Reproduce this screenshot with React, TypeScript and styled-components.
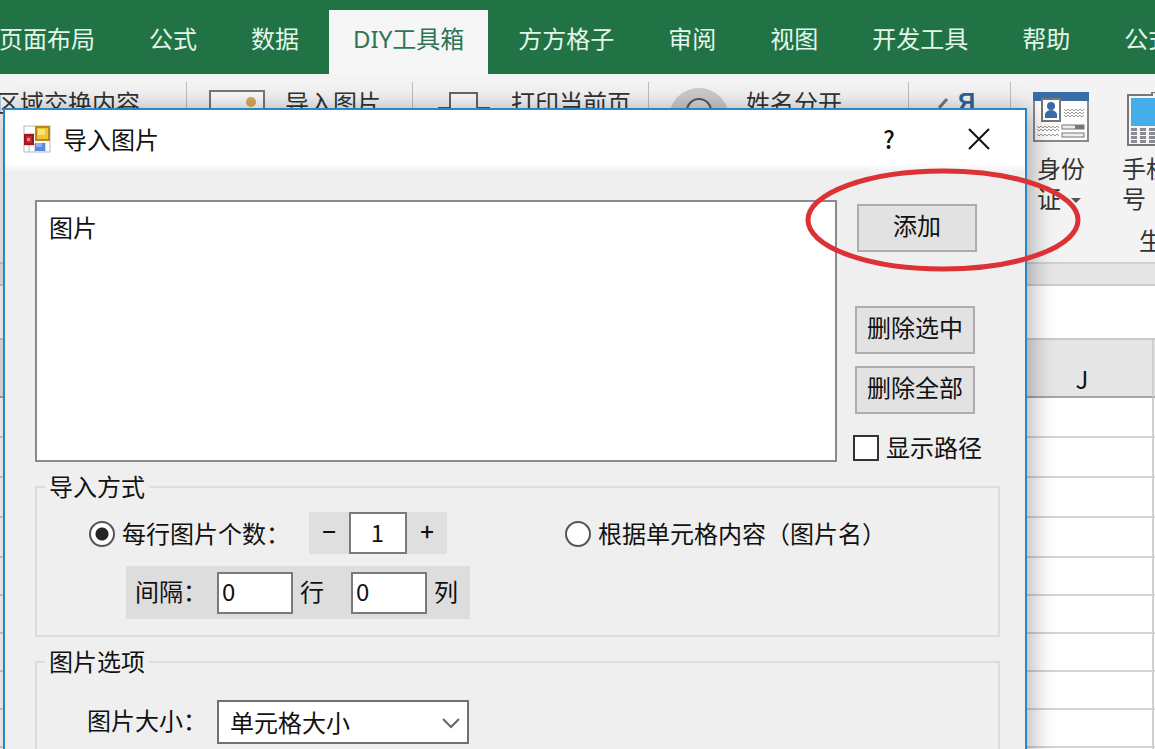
import React, { useState } from "react";
import styled, { createGlobalStyle } from "styled-components";

const GlobalStyle = createGlobalStyle`
  *, *::before, *::after { box-sizing: border-box; }
  body {
    margin: 0;
    font-family: "Noto Sans CJK SC", sans-serif;
    font-size: 24px;
    line-height: 28px;
    color: #111;
  }
  button, input, select { font: inherit; color: inherit; }
`;

const Page = styled.div`
  position: relative;
  display: flex;
  flex-direction: column;
  height: 100vh;
  overflow: hidden;
  background: #fff;
`;

/* ---------- workbook behind the dialog ---------- */

const TabBar = styled.nav`
  display: flex;
  flex: none;
  gap: 6px;
  height: 74px;
  padding-top: 10px;
  overflow: hidden;
  background: #217346;
`;

const Tab = styled.button<{ $active?: boolean }>`
  flex: none;
  padding: 0 24px 6px;
  border: 0;
  white-space: nowrap;
  font-family: "Noto Sans", "Noto Sans CJK SC", sans-serif;
  background: ${(p) => (p.$active ? "#f5f6f5" : "transparent")};
  color: ${(p) => (p.$active ? "#2f7355" : "#e4f6e9")};
  &:first-child { margin-left: -25px; }
`;

const Ribbon = styled.div`
  display: flex;
  flex: none;
  height: 190px;
  padding-top: 8px;
  overflow: hidden;
  background: #f3f3f4;
  border-bottom: 2px solid #cfcfcf;
`;

const Group = styled.div<{ $width: number; $pad: number; $gap: number }>`
  display: flex;
  flex: none;
  align-items: flex-start;
  width: ${(p) => p.$width}px;
  padding: 6px 0 0 ${(p) => p.$pad}px;
  gap: ${(p) => p.$gap}px;
  white-space: nowrap;
  color: #333;
  border-right: 1px solid #bdbdbf;
  svg { display: block; flex: none; }
`;

const FirstCommand = styled.span`
  margin-left: -4px;
`;

const BlueLetter = styled.span`
  font-family: "Liberation Sans", sans-serif;
  font-weight: 700;
  color: #2f6298;
`;

const LargeGroup = styled.div`
  display: flex;
  flex: none;
  flex-direction: column;
  padding: 10px 0 0 22px;
`;

const LargeRow = styled.div`
  display: flex;
  gap: 33px;
`;

const LargeButton = styled.button`
  display: flex;
  flex-direction: column;
  align-items: center;
  padding: 0;
  border: 0;
  background: none;
  color: #333;
  line-height: 30px;
  text-align: left;
`;

const LargeIcon = styled.span`
  display: block;
  height: 61px;
  svg { display: block; }
`;

const LargeLabel = styled.span`
  display: block;
  width: 48px;
  white-space: nowrap;
  svg { margin: 0 0 4px 9px; }
`;

const GroupName = styled.div`
  padding: 13px 0 0 106px;
  color: #333;
`;

const Strip = styled.div`
  flex: none;
  height: 22px;
  background: #e6e6e6;
  border-bottom: 2px solid #cdcdcd;
`;

const FormulaBar = styled.div`
  flex: none;
  height: 54px;
  background: #fff;
  border-bottom: 2px solid #cacaca;
`;

const Sheet = styled.table`
  width: 100%;
  table-layout: fixed;
  border-collapse: separate;
  border-spacing: 0;
  th {
    height: 58px;
    padding: 0 0 3px 2px;
    vertical-align: bottom;
    font-weight: 400;
    background: #e6e6e6;
    border-bottom: 2px solid #a6a6a6;
  }
  td {
    height: 38px;
    padding: 0;
    border-bottom: 2px solid #d4d4d4;
  }
  tr:nth-child(-n + 4) td { height: 40px; }
  td:nth-child(2), th:nth-child(2) { border-right: 2px solid #cfcfcf; }
`;

/* ---------- dialog ---------- */

const Dialog = styled.section`
  position: absolute;
  top: 108px;
  left: 3px;
  right: 128px;
  border: 2px solid #2a86c4;
  background: #efefef;
  box-shadow: 4px 2px 24px rgba(0, 0, 0, 0.32);
`;

const TitleBar = styled.header`
  display: flex;
  align-items: center;
  height: 62px;
  padding: 0 31px 5px 18px;
  background: linear-gradient(#fff 54px, #efefef);
  svg { display: block; }
`;

const Title = styled.h1`
  flex: 1;
  margin: 0 0 0 12px;
  font-size: 24px;
  font-weight: 400;
`;

const CaptionButton = styled.button`
  display: flex;
  justify-content: center;
  align-items: center;
  width: 30px;
  height: 30px;
  margin-left: 60px;
  padding: 0;
  border: 0;
  background: none;
  font-weight: 500;
`;

const Body = styled.div`
  padding: 28px 25px 0 30px;
`;

const TopArea = styled.div`
  display: flex;
  align-items: flex-start;
  gap: 18px;
`;

const ListBox = styled.div`
  flex: 1;
  height: 262px;
  padding: 11px 12px;
  background: #fff;
  border: 2px solid #8a8a8a;
`;

const Side = styled.div`
  display: flex;
  flex-direction: column;
  width: 145px;
  padding-top: 4px;
`;

const PushButton = styled.button<{ $gap: number; $indent?: number }>`
  width: 120px;
  height: 48px;
  margin: 0 0 ${(p) => p.$gap}px ${(p) => p.$indent || 0}px;
  padding: 0 0 6px;
  border: 2px solid #adadad;
  background: #e2e2e2;
  white-space: nowrap;
`;

const CheckLabel = styled.label`
  display: flex;
  align-items: center;
  gap: 7px;
  margin-left: -2px;
  height: 28px;
  white-space: nowrap;
`;

const CheckBox = styled.input`
  appearance: none;
  width: 26px;
  height: 26px;
  margin: 2px 0 0;
  border: 2px solid #333;
  background: #fff;
  &:checked { background: #333; box-shadow: inset 0 0 0 4px #fff; }
`;

const FieldGroup = styled.fieldset<{ $top: number }>`
  margin: 11px 0 0;
  padding: ${(p) => p.$top}px 0 16px;
  border: 2px solid #dcdcdc;
`;

const Legend = styled.legend`
  margin-left: 8px;
  padding: 0 4px 2px;
  line-height: 26px;
`;

const Row = styled.div`
  display: flex;
  align-items: center;
`;

const ModeRow = styled(Row)`
  height: 42px;
  padding-left: 52px;
`;

const RadioLabel = styled.label`
  display: flex;
  align-items: center;
  gap: 7px;
  white-space: nowrap;
`;

const Radio = styled.input`
  appearance: none;
  width: 26px;
  height: 26px;
  margin: 2px 0 0;
  border: 2px solid #555;
  border-radius: 50%;
  background: #fff;
  &:checked { background: radial-gradient(circle, #262626 0 6px, #fff 7px); }
`;

const Stepper = styled.div`
  display: flex;
  margin: 0 118px 0 19px;
  background: #dfdfdf;
`;

const StepButton = styled.button`
  width: 40px;
  height: 42px;
  padding: 0 0 4px;
  border: 0;
  background: none;
  font-weight: 500;
`;

const TextBox = styled.input<{ $width: number; $center?: boolean }>`
  width: ${(p) => p.$width}px;
  height: 42px;
  padding: 0 4px 4px 3px;
  border: 2px solid #7a7a7a;
  border-radius: 0;
  background: #fff;
  text-align: ${(p) => (p.$center ? "center" : "left")};
`;

const SpacingRow = styled(Row)`
  width: 344px;
  height: 53px;
  margin: 12px 0 0 89px;
  padding-left: 9px;
  gap: 7px;
  background: #dddddd;
`;

const SpacingLabel = styled.label`
  flex: none;
  width: 75px;
  padding-bottom: 4px;
  white-space: nowrap;
`;

const Unit = styled.span`
  flex: none;
  width: 44px;
  padding-bottom: 4px;
  &:last-child { width: 24px; }
`;

const SizeRow = styled(Row)`
  height: 44px;
  padding-left: 50px;
`;

const SizeLabel = styled.label`
  width: 130px;
  padding-bottom: 4px;
  white-space: nowrap;
`;

const SelectWrap = styled.div`
  position: relative;
  width: 252px;
  svg {
    position: absolute;
    right: 8px;
    top: 17px;
    pointer-events: none;
  }
`;

const Select = styled.select`
  appearance: none;
  display: block;
  width: 100%;
  height: 44px;
  padding: 0 36px 0 11px;
  border: 2px solid #707070;
  border-radius: 0;
  background: #fff;
`;

const Highlight = styled.svg`
  position: absolute;
  top: 167px;
  right: 74px;
  pointer-events: none;
`;

/* ---------- drawings ---------- */

const PictureIcon = () => (
  <svg width="56" height="40" viewBox="0 0 56 40">
    <rect x="1" y="3" width="54" height="36" fill="#fafafa" stroke="#777" strokeWidth="2" />
    <circle cx="42" cy="14" r="5" fill="#dda95c" />
    <path d="M2 38 18 24 32 38" fill="none" stroke="#5b8f6b" strokeWidth="2" />
  </svg>
);

const PrinterIcon = () => (
  <svg width="54" height="40" viewBox="0 0 54 40">
    <path d="M13 21V5h27v16" fill="#fafafa" stroke="#666" strokeWidth="2" />
    <path d="M2 38V20h11M40 20h12v18" fill="none" stroke="#555" strokeWidth="2" />
  </svg>
);

const PersonIcon = () => (
  <svg width="60" height="60" viewBox="0 0 60 60">
    <circle cx="30" cy="30" r="30" fill="#cbcbcb" />
    <circle cx="30" cy="23" r="12" fill="#d6d6d6" stroke="#555" strokeWidth="2" />
  </svg>
);

const SlashIcon = () => (
  <svg width="12" height="28" viewBox="0 0 12 28">
    <path d="M1 20 9 11" stroke="#777" strokeWidth="3" />
  </svg>
);

const zigzag = (x: number, y: number, n: number) =>
  `M${x} ${y}` + Array.from({ length: n }, (_, i) => `l2 ${i % 2 ? -2 : 2}`).join("");

const IdCardIcon = () => (
  <svg width="56" height="50" viewBox="0 0 56 50">
    <rect x="1" y="1" width="54" height="48" fill="#fdfdfd" stroke="#8a8a8a" strokeWidth="2" />
    <rect width="56" height="9" fill="#3a6ca8" />
    <rect x="9" y="7" width="18" height="22" fill="#fff" stroke="#777" strokeWidth="2" />
    <circle cx="18" cy="14" r="4" fill="#3a6ca8" />
    <path d="M12 26v-4q2-4 6-4t6 4v4z" fill="#3a6ca8" />
    <path
      d={[
        zigzag(31, 17, 10),
        zigzag(31, 20, 10),
        zigzag(31, 23, 10),
        zigzag(4, 34, 11),
        zigzag(4, 37, 11),
        zigzag(4, 42, 11),
      ].join("")}
      fill="none"
      stroke="#999"
      strokeWidth="1"
    />
    <rect x="29" y="33" width="22" height="4" fill="#eee" stroke="#777" />
    <rect x="42" y="33" width="9" height="4" fill="#777" />
    <rect x="29" y="41" width="22" height="4" fill="#eee" stroke="#777" />
  </svg>
);

const PhoneIcon = () => (
  <svg width="38" height="54" viewBox="0 0 38 54">
    <path d="M1 3h24V0h9v3h3v50H1z" fill="#f4f4f4" stroke="#777" strokeWidth="2" />
    <rect x="4" y="6" width="31" height="28" fill="#45aeea" />
    {[4, 13, 22, 31].map((x) =>
      [36, 40, 44, 48].map((y) => <rect key={`${x}-${y}`} x={x} y={y} width="6" height="3" fill="#8b8b93" />)
    )}
  </svg>
);

const DropArrow = () => (
  <svg width="12" height="6" viewBox="0 0 12 6">
    <path d="M1 0h10L6 5z" fill="#555" />
  </svg>
);

const FormIcon = () => (
  <svg width="28" height="28" viewBox="0 0 28 28">
    <rect x="1" y="1" width="26" height="26" fill="#fff" stroke="#b9b9b9" />
    <path d="M1 9h11M6 19v8M12 19v8M1 20h12M22 17v10" stroke="#b9b9b9" />
    <rect x="13" y="2" width="13" height="13" fill="#f3c62b" stroke="#b8881a" strokeWidth="2" />
    <rect x="15" y="4" width="7" height="6" fill="#fbe27a" />
    <rect x="2" y="10" width="8" height="9" fill="#c9252d" stroke="#971a20" strokeWidth="2" />
    <rect x="4" y="13" width="3" height="3" fill="#f08a8a" />
    <rect x="12" y="18" width="10" height="8" fill="#5b86e6" />
    <rect x="13" y="18" width="6" height="4" fill="#8fb0f5" />
  </svg>
);

const tabs = ["页面布局", "公式", "数据", "DIY工具箱", "方方格子", "审阅", "视图", "开发工具", "帮助", "公式"];

export default function App() {
  const [perRow, setPerRow] = useState(1);
  return (
    <>
      <GlobalStyle />
      <Page>
        <TabBar>
          {tabs.map((t, i) => (
            <Tab key={i} $active={i === 3}>{t}</Tab>
          ))}
        </TabBar>
        <Ribbon>
          <Group $width={187} $pad={0} $gap={0}>
            <FirstCommand>区域交换内容</FirstCommand>
          </Group>
          <Group $width={226} $pad={22} $gap={20}>
            <PictureIcon />
            <span>导入图片</span>
          </Group>
          <Group $width={236} $pad={24} $gap={20}>
            <PrinterIcon />
            <span>打印当前页</span>
          </Group>
          <Group $width={260} $pad={20} $gap={17}>
            <PersonIcon />
            <span>姓名分开</span>
          </Group>
          <Group $width={102} $pad={29} $gap={8}>
            <SlashIcon />
            <BlueLetter>Я</BlueLetter>
          </Group>
          <LargeGroup>
            <LargeRow>
              <LargeButton>
                <LargeIcon><IdCardIcon /></LargeIcon>
                <LargeLabel>身份<br />证<DropArrow /></LargeLabel>
              </LargeButton>
              <LargeButton>
                <LargeIcon><PhoneIcon /></LargeIcon>
                <LargeLabel>手机<br />号<DropArrow /></LargeLabel>
              </LargeButton>
            </LargeRow>
            <GroupName>生成</GroupName>
          </LargeGroup>
        </Ribbon>
        <Strip />
        <FormulaBar />
        <Sheet>
          <colgroup>
            <col />
            <col style={{ width: 144 }} />
            <col style={{ width: 1 }} />
          </colgroup>
          <thead>
            <tr><th /><th scope="col">J</th><th /></tr>
          </thead>
          <tbody>
            {Array.from({ length: 10 }, (_, i) => (
              <tr key={i}><td /><td /><td /></tr>
            ))}
          </tbody>
        </Sheet>

        <Dialog role="dialog" aria-labelledby="dialog-title">
          <TitleBar>
            <FormIcon />
            <Title id="dialog-title">导入图片</Title>
            <CaptionButton>?</CaptionButton>
            <CaptionButton aria-label="关闭">
              <svg width="22" height="22" viewBox="0 0 22 22">
                <path d="M1 1 21 21M21 1 1 21" stroke="#111" strokeWidth="2" />
              </svg>
            </CaptionButton>
          </TitleBar>
          <Body>
            <TopArea>
              <ListBox>图片</ListBox>
              <Side>
                <PushButton $gap={54} $indent={2}>添加</PushButton>
                <PushButton $gap={12}>删除选中</PushButton>
                <PushButton $gap={19}>删除全部</PushButton>
                <CheckLabel>
                  <CheckBox type="checkbox" />
                  显示路径
                </CheckLabel>
              </Side>
            </TopArea>

            <FieldGroup $top={11}>
              <Legend>导入方式</Legend>
              <ModeRow>
                <RadioLabel>
                  <Radio type="radio" name="mode" defaultChecked />
                  每行图片个数：
                </RadioLabel>
                <Stepper>
                  <StepButton onClick={() => setPerRow((n) => Math.max(1, n - 1))}>−</StepButton>
                  <TextBox
                    $width={58}
                    $center
                    aria-label="每行图片个数"
                    value={perRow}
                    onChange={(e) => setPerRow(Number(e.target.value) || 1)}
                  />
                  <StepButton onClick={() => setPerRow((n) => n + 1)}>+</StepButton>
                </Stepper>
                <RadioLabel>
                  <Radio type="radio" name="mode" />
                  根据单元格内容（图片名）
                </RadioLabel>
              </ModeRow>
              <SpacingRow>
                <SpacingLabel htmlFor="gap-rows">间隔：</SpacingLabel>
                <TextBox id="gap-rows" $width={76} defaultValue="0" />
                <Unit>行</Unit>
                <TextBox $width={76} defaultValue="0" aria-label="间隔列数" />
                <Unit>列</Unit>
              </SpacingRow>
            </FieldGroup>

            <FieldGroup $top={24}>
              <Legend>图片选项</Legend>
              <SizeRow>
                <SizeLabel htmlFor="size">图片大小：</SizeLabel>
                <SelectWrap>
                  <Select id="size" defaultValue="cell">
                    <option value="cell">单元格大小</option>
                  </Select>
                  <svg width="20" height="12" viewBox="0 0 20 12">
                    <path d="M2 2 10 10 18 2" fill="none" stroke="#666" strokeWidth="2" />
                  </svg>
                </SelectWrap>
              </SizeRow>
            </FieldGroup>
          </Body>
        </Dialog>

        <Highlight width="276" height="106" viewBox="0 0 276 106">
          <ellipse cx="138" cy="53" rx="135" ry="49" fill="none" stroke="#dc3236" strokeWidth="5" />
        </Highlight>
      </Page>
    </>
  );
}
